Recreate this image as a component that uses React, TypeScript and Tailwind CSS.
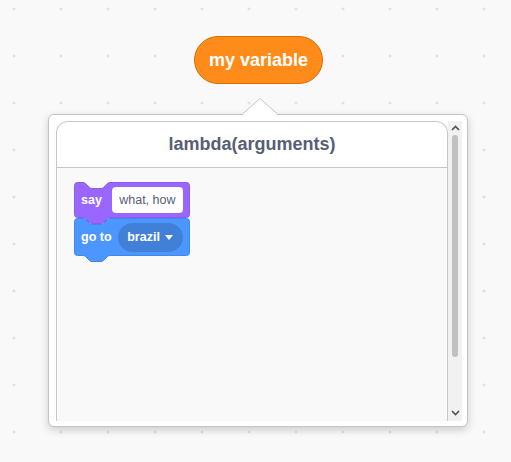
import React from "react";

const blockPath = (w: number, h: number) =>
  `M0.5,3.5 A3,3 0 0 1 3.5,0.5 H9 c1.5,0 2.25,0.75 3,1.5 l3,3 c0.75,0.75 1.5,1.5 3,1.5 h9 c1.5,0 2.25,-0.75 3,-1.5 l3,-3 c0.75,-0.75 1.5,-1.5 3,-1.5 H${w - 3.5} a3,3 0 0 1 3,3 V${h - 3.5} a3,3 0 0 1 -3,3 H36 c-1.5,0 -2.25,0.75 -3,1.5 l-3,3 c-0.75,0.75 -1.5,1.5 -3,1.5 h-9 c-1.5,0 -2.25,-0.75 -3,-1.5 l-3,-3 c-0.75,-0.75 -1.5,-1.5 -3,-1.5 H3.5 a3,3 0 0 1 -3,-3 z`;

function Block({ w, h, fill, stroke, children }: { w: number; h: number; fill: string; stroke: string; children: React.ReactNode }) {
  return (
    <div className="relative" style={{ width: w, height: h }}>
      <svg className="absolute left-0 top-0 overflow-visible" width={w} height={h + 7}>
        <path d={blockPath(w, h)} fill={fill} stroke={stroke} strokeWidth={1} />
      </svg>
      <div className="relative flex h-full items-center pl-[7px]">{children}</div>
    </div>
  );
}

function Chevron({ up }: { up?: boolean }) {
  return (
    <svg width="9" height="6" viewBox="0 0 9 6">
      <polyline
        points={up ? "1,5 4.5,1.5 8,5" : "1,1 4.5,4.5 8,1"}
        fill="none"
        stroke="#505050"
        strokeWidth="1.6"
      />
    </svg>
  );
}

export default function App() {
  return (
    <div
      className="relative h-[462px] w-[511px] overflow-hidden bg-[#f9f9f9] bg-[radial-gradient(circle,#d9d9d9_1px,transparent_1.3px)] bg-[size:47px_47px] bg-[position:-9.5px_-14.5px]"
      style={{ fontFamily: '"Liberation Sans", Arial, sans-serif' }}
    >
      <div className="ml-[48px] flex w-[420px] flex-col items-center pt-[36px]">
        <div className="ml-[1px] flex h-[48px] w-[129px] items-center justify-center rounded-full border border-[#db6e00] bg-[#ff8c1a] text-[18px] font-bold text-white">
          my variable
        </div>
        <svg width="36" height="17" className="relative z-10 ml-[4px] mt-[14px] -mb-[1px]" viewBox="0 0 36 17">
          <polygon points="0,17 18,0.5 36,17" fill="#ffffff" />
          <polyline points="0,16.5 18,0.5 36,16.5" fill="none" stroke="#c4c4c4" strokeWidth="1" />
        </svg>
        <div className="flex h-[313px] w-[420px] rounded-[6px] border border-[#c4c4c4] bg-white pb-[5px] pl-[7px] pr-[5px] pt-[6px] shadow-[0_3px_8px_rgba(0,0,0,0.18)]">
          <div className="flex w-[392px] flex-col rounded-t-[12px] border border-b-0 border-[#c6c6c6]">
            <div className="flex h-[46px] items-center justify-center border-b border-[#c6c6c6] text-[18px] font-bold text-[#575e75]">
              lambda(arguments)
            </div>
            <div className="flex-1 bg-[#f9f9f9] pl-[17px] pt-[14px]">
              <Block w={116} h={36} fill="#9966ff" stroke="#8a5cf0">
                <span className="text-[12.5px] font-bold text-white">say</span>
                <div className="ml-[10px] flex h-[26px] w-[71px] items-center justify-center rounded-[4px] bg-white text-[12.5px] text-[#575e75]">
                  what, how
                </div>
              </Block>
              <Block w={116} h={38} fill="#4c97ff" stroke="#4287ec">
                <span className="text-[12.5px] font-bold text-white">go to</span>
                <div className="ml-[6px] flex h-[29px] w-[65px] items-center justify-center gap-[5px] rounded-full bg-[#4280d7] text-[12.5px] font-bold text-white">
                  brazil
                  <svg width="8" height="5" viewBox="0 0 8 5">
                    <polygon points="0,0 8,0 4,5" fill="#ffffff" />
                  </svg>
                </div>
              </Block>
            </div>
          </div>
          <div className="flex w-[14px] flex-col items-center bg-[#f1f1f1] pb-[5px] pt-[4px]">
            <Chevron up />
            <div className="mt-[4px] h-[222px] w-[6px] rounded-full bg-[#c1c1c1]" />
            <div className="flex-1" />
            <Chevron />
          </div>
        </div>
      </div>
    </div>
  );
}
